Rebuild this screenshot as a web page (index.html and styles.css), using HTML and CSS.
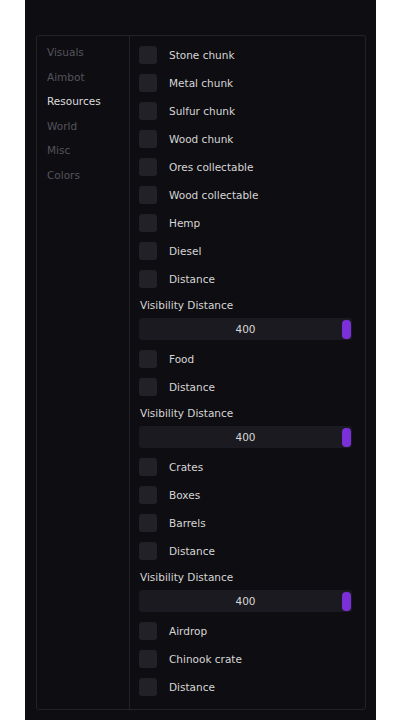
FILE: index.html
```html
<!DOCTYPE html>
<html>
<head>
<meta charset="utf-8">
<link rel="stylesheet" href="styles.css">
</head>
<body>
<div class="panel">
  <div class="box">
    <nav class="sidebar">
      <div class="tab">Visuals</div>
      <div class="tab">Aimbot</div>
      <div class="tab active">Resources</div>
      <div class="tab">World</div>
      <div class="tab">Misc</div>
      <div class="tab">Colors</div>
    </nav>
    <main class="content">
      <div class="row"><span class="check"></span><span class="label">Stone chunk</span></div>
      <div class="row"><span class="check"></span><span class="label">Metal chunk</span></div>
      <div class="row"><span class="check"></span><span class="label">Sulfur chunk</span></div>
      <div class="row"><span class="check"></span><span class="label">Wood chunk</span></div>
      <div class="row"><span class="check"></span><span class="label">Ores collectable</span></div>
      <div class="row"><span class="check"></span><span class="label">Wood collectable</span></div>
      <div class="row"><span class="check"></span><span class="label">Hemp</span></div>
      <div class="row"><span class="check"></span><span class="label">Diesel</span></div>
      <div class="row"><span class="check"></span><span class="label">Distance</span></div>
      <div class="group">
        <div class="slabel">Visibility Distance</div>
        <div class="slider"><span class="value">400</span><span class="handle"></span></div>
      </div>
      <div class="row"><span class="check"></span><span class="label">Food</span></div>
      <div class="row"><span class="check"></span><span class="label">Distance</span></div>
      <div class="group">
        <div class="slabel">Visibility Distance</div>
        <div class="slider"><span class="value">400</span><span class="handle"></span></div>
      </div>
      <div class="row"><span class="check"></span><span class="label">Crates</span></div>
      <div class="row"><span class="check"></span><span class="label">Boxes</span></div>
      <div class="row"><span class="check"></span><span class="label">Barrels</span></div>
      <div class="row"><span class="check"></span><span class="label">Distance</span></div>
      <div class="group">
        <div class="slabel">Visibility Distance</div>
        <div class="slider"><span class="value">400</span><span class="handle"></span></div>
      </div>
      <div class="row"><span class="check"></span><span class="label">Airdrop</span></div>
      <div class="row"><span class="check"></span><span class="label">Chinook crate</span></div>
      <div class="row"><span class="check"></span><span class="label">Distance</span></div>
    </main>
  </div>
</div>
</body>
</html>
```
FILE: styles.css
```css
html, body {
  margin: 0;
  padding: 0;
  background: #ffffff;
}
body {
  font-family: "DejaVu Sans", sans-serif;
  font-size: 10.5px;
}
.panel {
  margin-left: 25px;
  width: 351px;
  height: 720px;
  background: #0e0d12;
  padding: 35px 10px 0 11px;
  box-sizing: border-box;
}
.box {
  display: flex;
  border: 1px solid #232228;
  border-radius: 3px;
  height: 675px;
  box-sizing: border-box;
}
.sidebar {
  width: 93px;
  border-right: 1px solid #232228;
  padding: 4px 0 0 10px;
  box-sizing: border-box;
  display: flex;
  flex-direction: column;
}
.tab {
  height: 24.6px;
  line-height: 24.6px;
  color: #55545b;
}
.tab.active {
  color: #dcdcdc;
}
.content {
  flex: 1;
  padding: 10px 13px 0 9px;
  display: flex;
  flex-direction: column;
  gap: 10px;
}
.row {
  display: flex;
  align-items: center;
  height: 18px;
}
.check {
  width: 18px;
  height: 18px;
  border-radius: 3px;
  background: #222127;
  flex: none;
}
.label {
  margin-left: 12px;
  color: #d6d6d6;
}
.group {
  display: flex;
  flex-direction: column;
  gap: 7px;
}
.slabel {
  margin-top: 1px;
  height: 12px;
  line-height: 12px;
  color: #d6d6d6;
  margin-left: 1px;
}
.slider {
  position: relative;
  height: 22px;
  background: #1b1a20;
  border-radius: 3px;
  display: flex;
  align-items: center;
  justify-content: center;
}
.value {
  color: #d6d6d6;
}
.handle {
  position: absolute;
  right: 1px;
  top: 2px;
  width: 9px;
  height: 19px;
  border-radius: 4px;
  background: #7a2fd8;
}
```
